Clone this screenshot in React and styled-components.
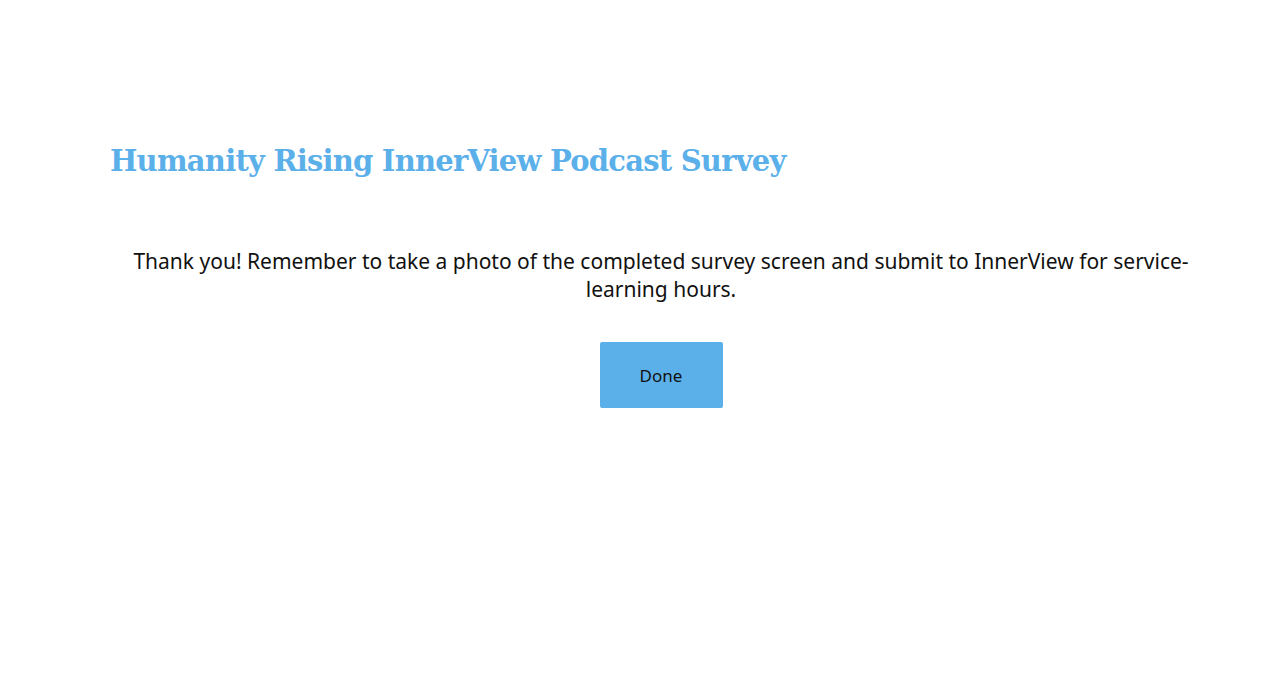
import React from "react";
import styled, { createGlobalStyle } from "styled-components";

const Global = createGlobalStyle`
  html, body { margin: 0; padding: 0; background: #ffffff; }
  body { font-family: "Noto Sans", "Liberation Sans", sans-serif; }
`;

const Page = styled.main`
  padding: 138px 68px 0 110px;
  box-sizing: border-box;
`;

const Title = styled.h1`
  margin: 0;
  font-family: "DejaVu Serif", "Liberation Serif", serif;
  font-weight: 700;
  font-size: 29px;
  line-height: 46px;
  color: #5bb0ea;
  letter-spacing: -0.78px;
`;

const Message = styled.p`
  margin: 63px 0 0;
  text-align: center;
  font-family: "Noto Sans", "Liberation Sans", sans-serif;
  font-size: 21px;
  line-height: 28px;
  color: #111111;
`;

const Actions = styled.div`
  display: flex;
  justify-content: center;
  margin-top: 39px;
`;

const DoneButton = styled.button`
  width: 123px;
  height: 66px;
  border: none;
  border-radius: 2px;
  background: #5bb0ea;
  color: #111;
  font-family: "Noto Sans", "Liberation Sans", sans-serif;
  font-size: 17px;
  cursor: pointer;
`;

export default function App() {
  return (
    <>
      <Global />
      <Page>
        <Title>Humanity Rising InnerView Podcast Survey</Title>
        <Message>
          Thank you! Remember to take a photo of the completed survey screen and submit to InnerView for service-learning hours.
        </Message>
        <Actions>
          <DoneButton>Done</DoneButton>
        </Actions>
      </Page>
    </>
  );
}
